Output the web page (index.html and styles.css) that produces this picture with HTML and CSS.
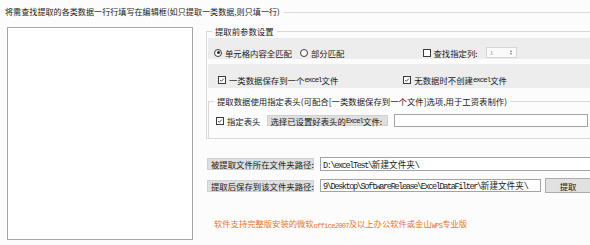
FILE: index.html
```html
<!DOCTYPE html>
<html lang="zh-CN">
<head>
    <meta charset="UTF-8">
    <meta name="viewport" content="width=device-width, initial-scale=1.0">
    <title>数据提取</title>
    <link rel="stylesheet" href="styles.css">
</head>
<body>
    <fieldset class="main-box">
        <legend>将需查找提取的各类数据一行行填写在编辑框(如只提取一类数据,则只填一行)</legend>
        <div class="content">
            <textarea class="data-list"></textarea>
            <div class="right-side">
                <fieldset class="params-box">
                    <legend>提取前参数设置</legend>
                    <div class="panel row-match">
                        <label class="opt"><span class="radio checked"></span>单元格内容全匹配</label>
                        <label class="opt opt-part"><span class="radio"></span>部分匹配</label>
                        <label class="opt opt-col"><span class="check"></span>查找指定列:</label>
                        <div class="spinner">
                            <span>1</span>
                            <span class="arrows"><i class="up"></i><i class="down"></i></span>
                        </div>
                    </div>
                    <div class="panel row-save">
                        <label class="opt"><span class="check checked"><svg viewBox="0 0 8 8"><polyline points="1.5,4 3.2,5.8 6.6,2"/></svg></span>一类数据保存到一个<span class="mono">excel</span>文件</label>
                        <label class="opt opt-empty"><span class="check checked"><svg viewBox="0 0 8 8"><polyline points="1.5,4 3.2,5.8 6.6,2"/></svg></span>无数据时不创建<span class="mono">excel</span>文件</label>
                    </div>
                    <fieldset class="header-box">
                        <legend>提取数据使用指定表头(可配合[一类数据保存到一个文件]选项,用于工资表制作)</legend>
                        <div class="header-row">
                            <label class="opt"><span class="check checked"><svg viewBox="0 0 8 8"><polyline points="1.5,4 3.2,5.8 6.6,2"/></svg></span>指定表头</label>
                            <span class="tag tag-header">选择已设置好表头的<span class="mono">Excel</span>文件:</span>
                            <div class="field field-header"></div>
                        </div>
                    </fieldset>
                </fieldset>

                <div class="path-row">
                    <span class="tag">被提取文件所在文件夹路径:</span>
                    <div class="field field-src">D:\excelTest\<span class="cjk">新建文件夹</span>\</div>
                </div>
                <div class="path-row path-save">
                    <span class="tag">提取后保存到该文件夹路径:</span>
                    <div class="field field-dst">9\Desktop\SoftwareRelease\ExcelDataFilter\<span class="cjk">新建文件夹</span>\</div>
                    <button class="btn-run">提取</button>
                </div>

                <p class="note">软件支持完整版安装的微软<span class="mono">office2007</span>及以上办公软件或金山<span class="mono">WPS</span>专业版</p>
            </div>
        </div>
    </fieldset>
</body>
</html>
```

FILE: styles.css
```css
* {
    box-sizing: border-box;
}

body {
    margin: 0;
    width: 590px;
    height: 245px;
    overflow: hidden;
    background: #fcfcfc;
    color: #1a1a1a;
    font-family: "Noto Sans CJK SC", sans-serif;
    font-size: 8.4px;
    line-height: 10px;
}

fieldset {
    margin: 0;
    padding: 0;
    min-width: 0;
}

legend {
    line-height: 10px;
}

.main-box {
    margin-top: 7px;
    border: none;
    border-top: 1px solid #dadada;
}

.main-box > legend {
    padding: 0 4px 0 5px;
    font-size: 8.1px;
}

.content {
    display: flex;
    align-items: flex-start;
    padding-top: 9px;
}

.data-list {
    flex: none;
    margin: 1px 0 0 7px;
    width: 186px;
    height: 213px;
    border: 1px solid #a7a7a7;
    background: #fff;
    resize: none;
    outline: none;
}

.right-side {
    flex: none;
    width: 392px;
    margin-left: 13px;
}

.params-box {
    border: none;
    border-top: 1px solid #d9d9d9;
    border-left: 1px solid #d9d9d9;
    border-bottom: 1px solid #d9d9d9;
}

.params-box > legend,
.header-box > legend {
    margin-left: 5px;
    padding: 0 3px;
}

.panel {
    display: flex;
    align-items: center;
    margin-left: 1px;
    background: #ededed;
}

.row-match {
    margin-top: 2px;
    height: 21px;
    padding: 8px 0 0 6px;
}

.row-save {
    margin-top: 5px;
    height: 24px;
    padding: 8px 0 0 10px;
}

.opt {
    display: flex;
    align-items: center;
    white-space: nowrap;
}

.opt-part {
    margin-left: 8px;
}

.opt-col {
    margin-left: 78px;
}

.opt-empty {
    margin-left: 65px;
}

.radio,
.check {
    flex: none;
    width: 8px;
    height: 8px;
    margin-right: 3px;
    border: 1px solid #3a3a3a;
    background: #fff;
}

.radio {
    border-radius: 50%;
    position: relative;
}

.radio.checked::after {
    content: "";
    position: absolute;
    left: 1.5px;
    top: 1.5px;
    width: 3px;
    height: 3px;
    border-radius: 50%;
    background: #222;
}

.check svg {
    display: block;
    width: 6px;
    height: 6px;
}

.check polyline {
    fill: none;
    stroke: #333;
    stroke-width: 1.1;
}

.mono {
    font-family: "Liberation Mono", monospace;
    font-size: 7.4px;
    letter-spacing: -1px;
    vertical-align: -0.5px;
}

.spinner {
    display: flex;
    align-items: center;
    justify-content: space-between;
    margin-left: 8px;
    width: 31px;
    height: 11px;
    padding: 0 4px 0 3px;
    border: 1px solid #d6d6d6;
    background: #fafafa;
    color: #9a9a9a;
    font-family: "Liberation Serif", serif;
    font-size: 7px;
}

.arrows {
    display: flex;
    flex-direction: column;
    gap: 1px;
}

.arrows i {
    display: block;
    width: 0;
    height: 0;
    border-left: 1.5px solid transparent;
    border-right: 1.5px solid transparent;
}

.arrows .up {
    border-bottom: 2px solid #777;
}

.arrows .down {
    border-top: 2px solid #777;
}

.header-box {
    margin: 8px 0 0 1px;
    border: none;
    border-top: 1px solid #d9d9d9;
    border-left: 1px solid #d9d9d9;
}

.header-row {
    display: flex;
    align-items: center;
    height: 32px;
    padding: 8px 0 11px 7px;
}

.tag {
    flex: none;
    display: flex;
    align-items: center;
    height: 12px;
    width: 107px;
    padding-left: 3px;
    background: #dfdfdf;
    border: 1px solid #d0d0d0;
    white-space: nowrap;
}

.tag-header {
    width: 121px;
    height: 11px;
    margin-left: 6px;
}

.field {
    flex: none;
    height: 14px;
    margin-left: 6px;
    padding: 1px 0 0 2px;
    border: 1px solid #a3a3a3;
    background: #fff;
    font-family: "Liberation Mono", monospace;
    font-size: 8.6px;
    line-height: 11px;
    letter-spacing: -1.4px;
    white-space: nowrap;
    overflow: hidden;
}

.field .cjk {
    font-family: "Noto Sans CJK SC", sans-serif;
    letter-spacing: 0;
}

.field-header {
    width: 194px;
    height: 13px;
}

.path-row {
    display: flex;
    align-items: center;
    margin-top: 18px;
    padding-left: 1px;
}

.path-save {
    margin-top: 7px;
    height: 15px;
}

.field-src {
    width: 290px;
}

.field-dst {
    width: 221px;
    height: 13px;
    padding-top: 0;
}

.btn-run {
    flex: none;
    margin-left: 4px;
    width: 46px;
    height: 15px;
    padding: 0;
    border: 1px solid #adadad;
    background: #e1e1e1;
    color: #1a1a1a;
    font-family: inherit;
    font-size: 8.4px;
    line-height: 10px;
}

.note {
    margin: 25px 0 0;
    padding-left: 8px;
    color: #e4772f;
    font-size: 8.3px;
    white-space: nowrap;
}

.note .mono {
    font-size: 7.2px;
    letter-spacing: -0.8px;
}
```
